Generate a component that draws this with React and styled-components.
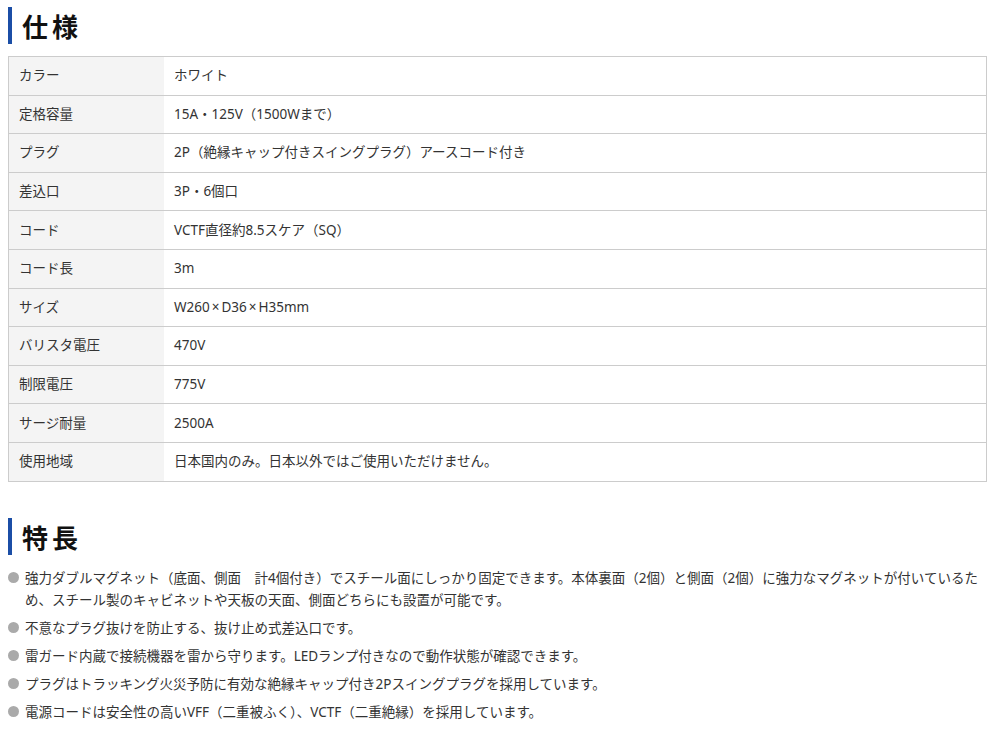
import React from "react";
import styled, { createGlobalStyle } from "styled-components";

const GlobalStyle = createGlobalStyle`
  html, body { margin: 0; padding: 0; background: #fff; }
  body {
    padding: 7px 8px 8px;
    font-family: "Noto Sans", "Noto Sans CJK JP", sans-serif;
    color: #333;
  }
`;

const Page = styled.div`
  width: 979px;
`;

const Heading = styled.h2`
  margin: 0;
  height: 37px;
  display: flex;
  align-items: center;
  border-left: 4px solid #1b4ea6;
  padding-left: 10px;
  font-family: "Noto Sans CJK JP", sans-serif;
  font-size: 26px;
  font-weight: 700;
  letter-spacing: 4px;
  color: #111;
  margin-bottom: ${(p) => p.$mb}px;
  margin-top: ${(p) => p.$mt || 0}px;
`;

const Table = styled.table`
  width: 100%;
  border-collapse: collapse;
  border: 1px solid #cccccc;
  font-size: 13.5px;
`;

const Row = styled.tr`
  border-bottom: 1px solid #cccccc;
`;

const Th = styled.th`
  width: 135px;
  background: #f4f4f4;
  text-align: left;
  font-weight: 400;
  padding: 8.3px 10px;
  line-height: 21px;
  vertical-align: middle;
`;

const Td = styled.td`
  padding: 8.3px 10px;
  line-height: 21px;
  background: #fff;
`;

const Mul = styled.span`
  margin: 0 2px;
`;

const List = styled.ul`
  list-style: none;
  margin: 12px 0 0;
  padding: 0;
  font-size: 13.5px;
`;

const Item = styled.li`
  position: relative;
  padding-left: 17px;
  line-height: 22px;
  margin-bottom: 6.1px;
  &::before {
    content: "";
    position: absolute;
    left: 0;
    top: 5.5px;
    width: 11px;
    height: 11px;
    border-radius: 50%;
    background: #aaaaaa;
  }
`;

const specs = [
  ["カラー", "ホワイト"],
  ["定格容量", "15A・125V（1500Wまで）"],
  ["プラグ", "2P（絶縁キャップ付きスイングプラグ）アースコード付き"],
  ["差込口", "3P・6個口"],
  ["コード", "VCTF直径約8.5スケア（SQ）"],
  ["コード長", "3m"],
  ["サイズ", "W260×D36×H35mm"],
  ["バリスタ電圧", "470V"],
  ["制限電圧", "775V"],
  ["サージ耐量", "2500A"],
  ["使用地域", "日本国内のみ。日本以外ではご使用いただけません。"],
];

const features = [
  "強力ダブルマグネット（底面、側面　計4個付き）でスチール面にしっかり固定できます。本体裏面（2個）と側面（2個）に強力なマグネットが付いているため、スチール製のキャビネットや天板の天面、側面どちらにも設置が可能です。",
  "不意なプラグ抜けを防止する、抜け止め式差込口です。",
  "雷ガード内蔵で接続機器を雷から守ります。LEDランプ付きなので動作状態が確認できます。",
  "プラグはトラッキング火災予防に有効な絶縁キャップ付き2Pスイングプラグを採用しています。",
  "電源コードは安全性の高いVFF（二重被ふく）、VCTF（二重絶縁）を採用しています。",
];

function renderValue(v) {
  const parts = v.split("×");
  return parts.flatMap((p, i) =>
    i === 0 ? [p] : [<Mul key={i}>×</Mul>, p]
  );
}

export default function App() {
  return (
    <Page>
      <GlobalStyle />
      <Heading $mb={12}>仕様</Heading>
      <Table>
        <tbody>
          {specs.map(([k, v]) => (
            <Row key={k}>
              <Th>{k}</Th>
              <Td>{renderValue(v)}</Td>
            </Row>
          ))}
        </tbody>
      </Table>
      <Heading $mt={36} $mb={0}>特長</Heading>
      <List>
        {features.map((f) => (
          <Item key={f}>{f}</Item>
        ))}
      </List>
    </Page>
  );
}
